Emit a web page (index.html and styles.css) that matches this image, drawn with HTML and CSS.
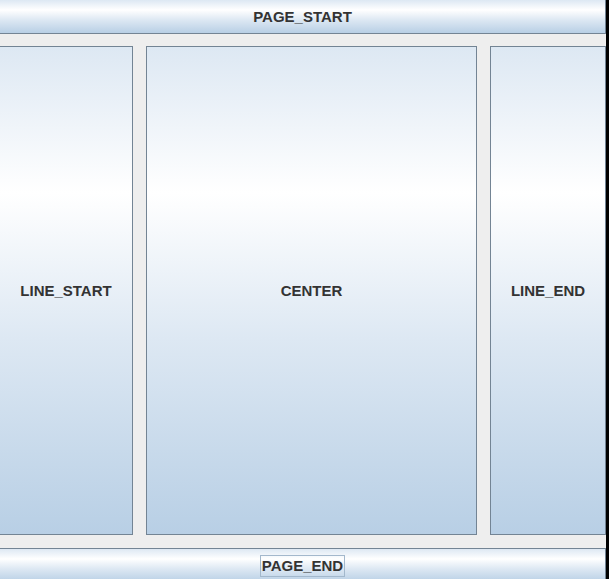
FILE: index.html
```html
<!DOCTYPE html>
<html>
<head>
<meta charset="utf-8">
<link rel="stylesheet" href="styles.css">
</head>
<body>
<div class="frame">
  <div class="layout">
    <div class="btn btn-top"><span class="label">PAGE_START</span></div>
    <div class="middle">
      <div class="btn btn-start"><span class="label">LINE_START</span></div>
      <div class="btn btn-center"><span class="label">CENTER</span></div>
      <div class="btn btn-end"><span class="label">LINE_END</span></div>
    </div>
    <div class="btn btn-bottom"><span class="label focus">PAGE_END</span></div>
  </div>
</div>
</body>
</html>
```
FILE: styles.css
```css
html, body {
  margin: 0;
  padding: 0;
  background: #000000;
}
.frame {
  width: 606px;
  height: 579px;
  background: #eeeeee;
  overflow: hidden;
}
.layout {
  margin-top: -1px;
  margin-left: -1px;
  width: 607px;
  display: flex;
  flex-direction: column;
  gap: 12px;
}
.btn {
  box-sizing: border-box;
  border: 1px solid #738494;
  background: linear-gradient(to bottom, #dde8f3 0%, #ffffff 30%, #dde8f3 60%, #b8cfe5 100%);
  display: flex;
  align-items: center;
  justify-content: center;
  font-family: "Liberation Sans", Arial, sans-serif;
  font-weight: bold;
  font-size: 15px;
  color: #333333;
}
.btn-top {
  height: 35px;
  padding-top: 1px;
}
.middle {
  display: flex;
  gap: 13px;
  height: 489px;
}
.btn-start {
  width: 134px;
}
.btn-center {
  width: 331px;
}
.btn-end {
  width: 116px;
}
.btn-bottom {
  margin-top: 1px;
  height: 35px;
}
.label {
  display: inline-block;
  line-height: 18px;
}
.focus {
  border: 1px solid #a3b8cc;
  padding: 1px 1px;
}
```
